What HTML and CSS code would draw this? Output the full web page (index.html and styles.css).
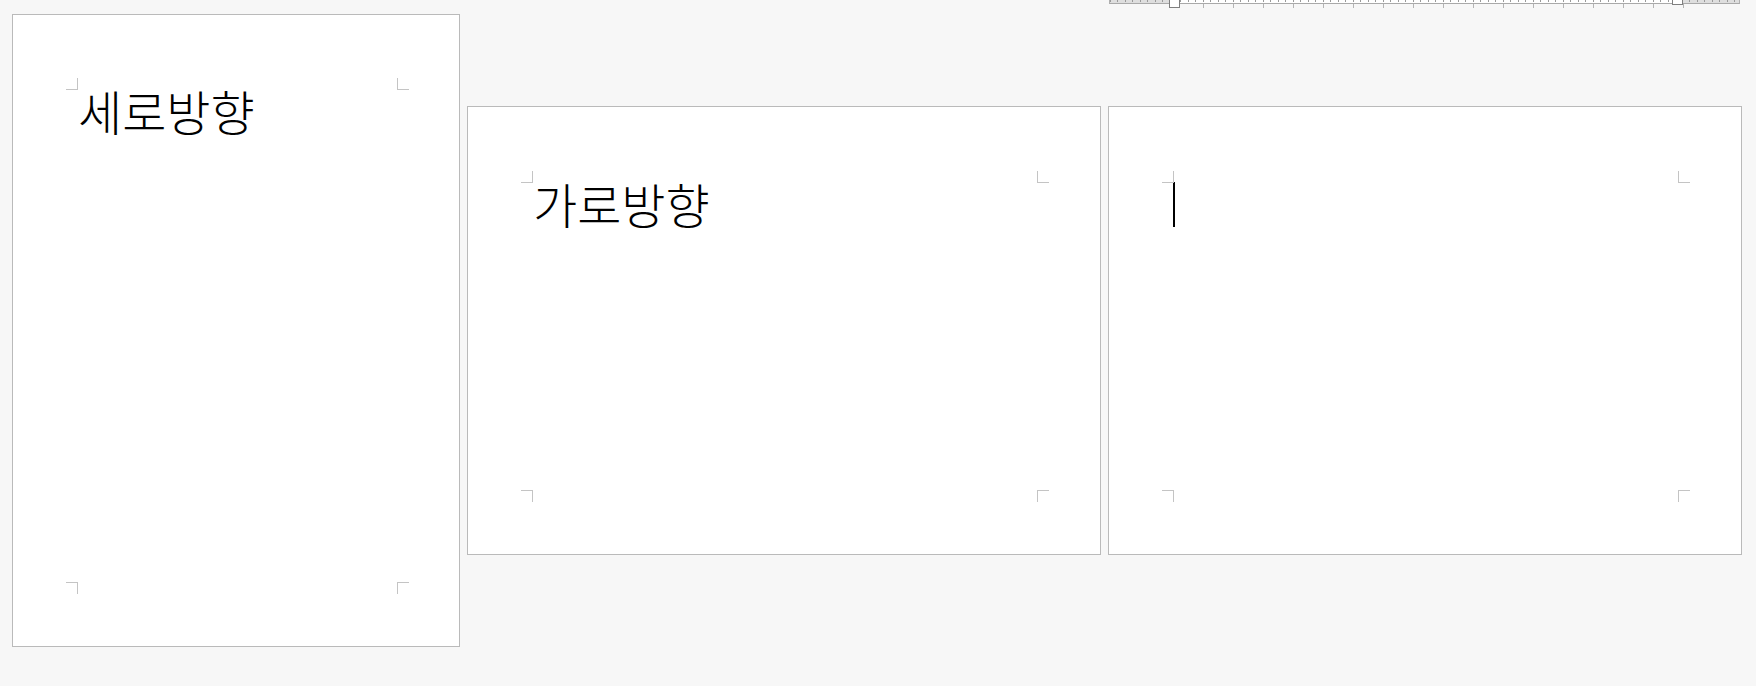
FILE: index.html
```html
<!DOCTYPE html>
<html lang="ko">
<head>
<meta charset="utf-8">
<title>페이지 방향</title>
<link rel="stylesheet" href="styles.css">
</head>
<body>
<div class="desk">
  <div class="page portrait">
    <div class="content">
      <i class="mk tl"></i><i class="mk tr"></i><i class="mk bl"></i><i class="mk br"></i>
      <p class="line">세로방향</p>
    </div>
  </div>
  <div class="page landscape">
    <div class="content">
      <i class="mk tl"></i><i class="mk tr"></i><i class="mk bl"></i><i class="mk br"></i>
      <p class="line">가로방향</p>
    </div>
  </div>
  <div class="page landscape">
    <div class="content">
      <i class="mk tl"></i><i class="mk tr"></i><i class="mk bl"></i><i class="mk br"></i>
      <span class="caret"></span>
    </div>
  </div>
</div>
<div class="ruler">
  <div class="ruler-strip">
    <div class="rg left"></div>
    <div class="rw"></div>
    <div class="rg right"></div>
  </div>
  <div class="ruler-ticks"></div>
  <span class="rmark rl"></span>
  <span class="rmark rr"></span>
</div>
</body>
</html>
```
FILE: styles.css
```css
html, body {
  margin: 0;
  padding: 0;
}
body {
  width: 1756px;
  height: 686px;
  overflow: hidden;
  background: #f7f7f7;
  font-family: "Noto Sans CJK KR", "Noto Sans", sans-serif;
  position: relative;
}
.desk {
  display: flex;
  align-items: flex-start;
  gap: 7px;
  padding: 14px 0 0 12px;
}
.page {
  box-sizing: border-box;
  background: #fff;
  border: 1px solid #bababa;
  flex: none;
}
.portrait {
  width: 448px;
  height: 633px;
  padding: 75px 62px 64px 65px;
}
.landscape {
  width: 634px;
  height: 449px;
  margin-top: 92px;
  padding: 76px 63px 64px 65px;
}
.content {
  display: flow-root;
  position: relative;
  height: 100%;
}
.mk {
  position: absolute;
  width: 11px;
  height: 11px;
  border: 0 solid #c4c4c4;
}
.tl { left: -12px; top: -12px; border-right-width: 1px; border-bottom-width: 1px; }
.tr { right: -12px; top: -12px; border-left-width: 1px; border-bottom-width: 1px; }
.bl { left: -12px; bottom: -12px; border-right-width: 1px; border-top-width: 1px; }
.br { right: -12px; bottom: -12px; border-left-width: 1px; border-top-width: 1px; }
.line {
  margin: -4px 0 0 0;
  font-size: 48px;
  line-height: 48px;
  font-weight: 300;
  color: #000;
  white-space: nowrap;
}
.caret {
  display: block;
  width: 2px;
  height: 45px;
  margin: -1px 0 0 -1px;
  background: #000;
}
.ruler {
  position: absolute;
  top: 0;
  left: 1109px;
  width: 631px;
  height: 9px;
}
.ruler-strip {
  display: flex;
  height: 3px;
  border-bottom: 1px solid #a9a9a9;
  border-left: 1px solid #b0b0b0;
  border-right: 1px solid #b0b0b0;
}
.rg {
  background: #dedede repeating-linear-gradient(to right, #9a9a9a 0 1px, transparent 1px 7.5px);
  background-size: 100% 2px;
  background-repeat: no-repeat;
}
.rg.left { width: 59px; }
.rg.right { width: 65px; }
.rw {
  flex: 1;
  background: #fff repeating-linear-gradient(to right, #9a9a9a 0 1px, transparent 1px 7.5px);
  background-size: 100% 2px;
  background-repeat: no-repeat;
  background-position: 4px 0;
}
.ruler-ticks {
  height: 4px;
  margin-left: 64px;
  width: 520px;
  background: repeating-linear-gradient(to right, #b4b4b4 0 1px, transparent 1px 30px);
}
.rmark {
  position: absolute;
  top: 0;
  box-sizing: border-box;
  background: #fff;
  border: 1px solid #7f7f7f;
  border-top: none;
}
.rl { left: 60px; width: 11px; height: 8px; }
.rr { left: 563px; width: 11px; height: 5px; }
```
